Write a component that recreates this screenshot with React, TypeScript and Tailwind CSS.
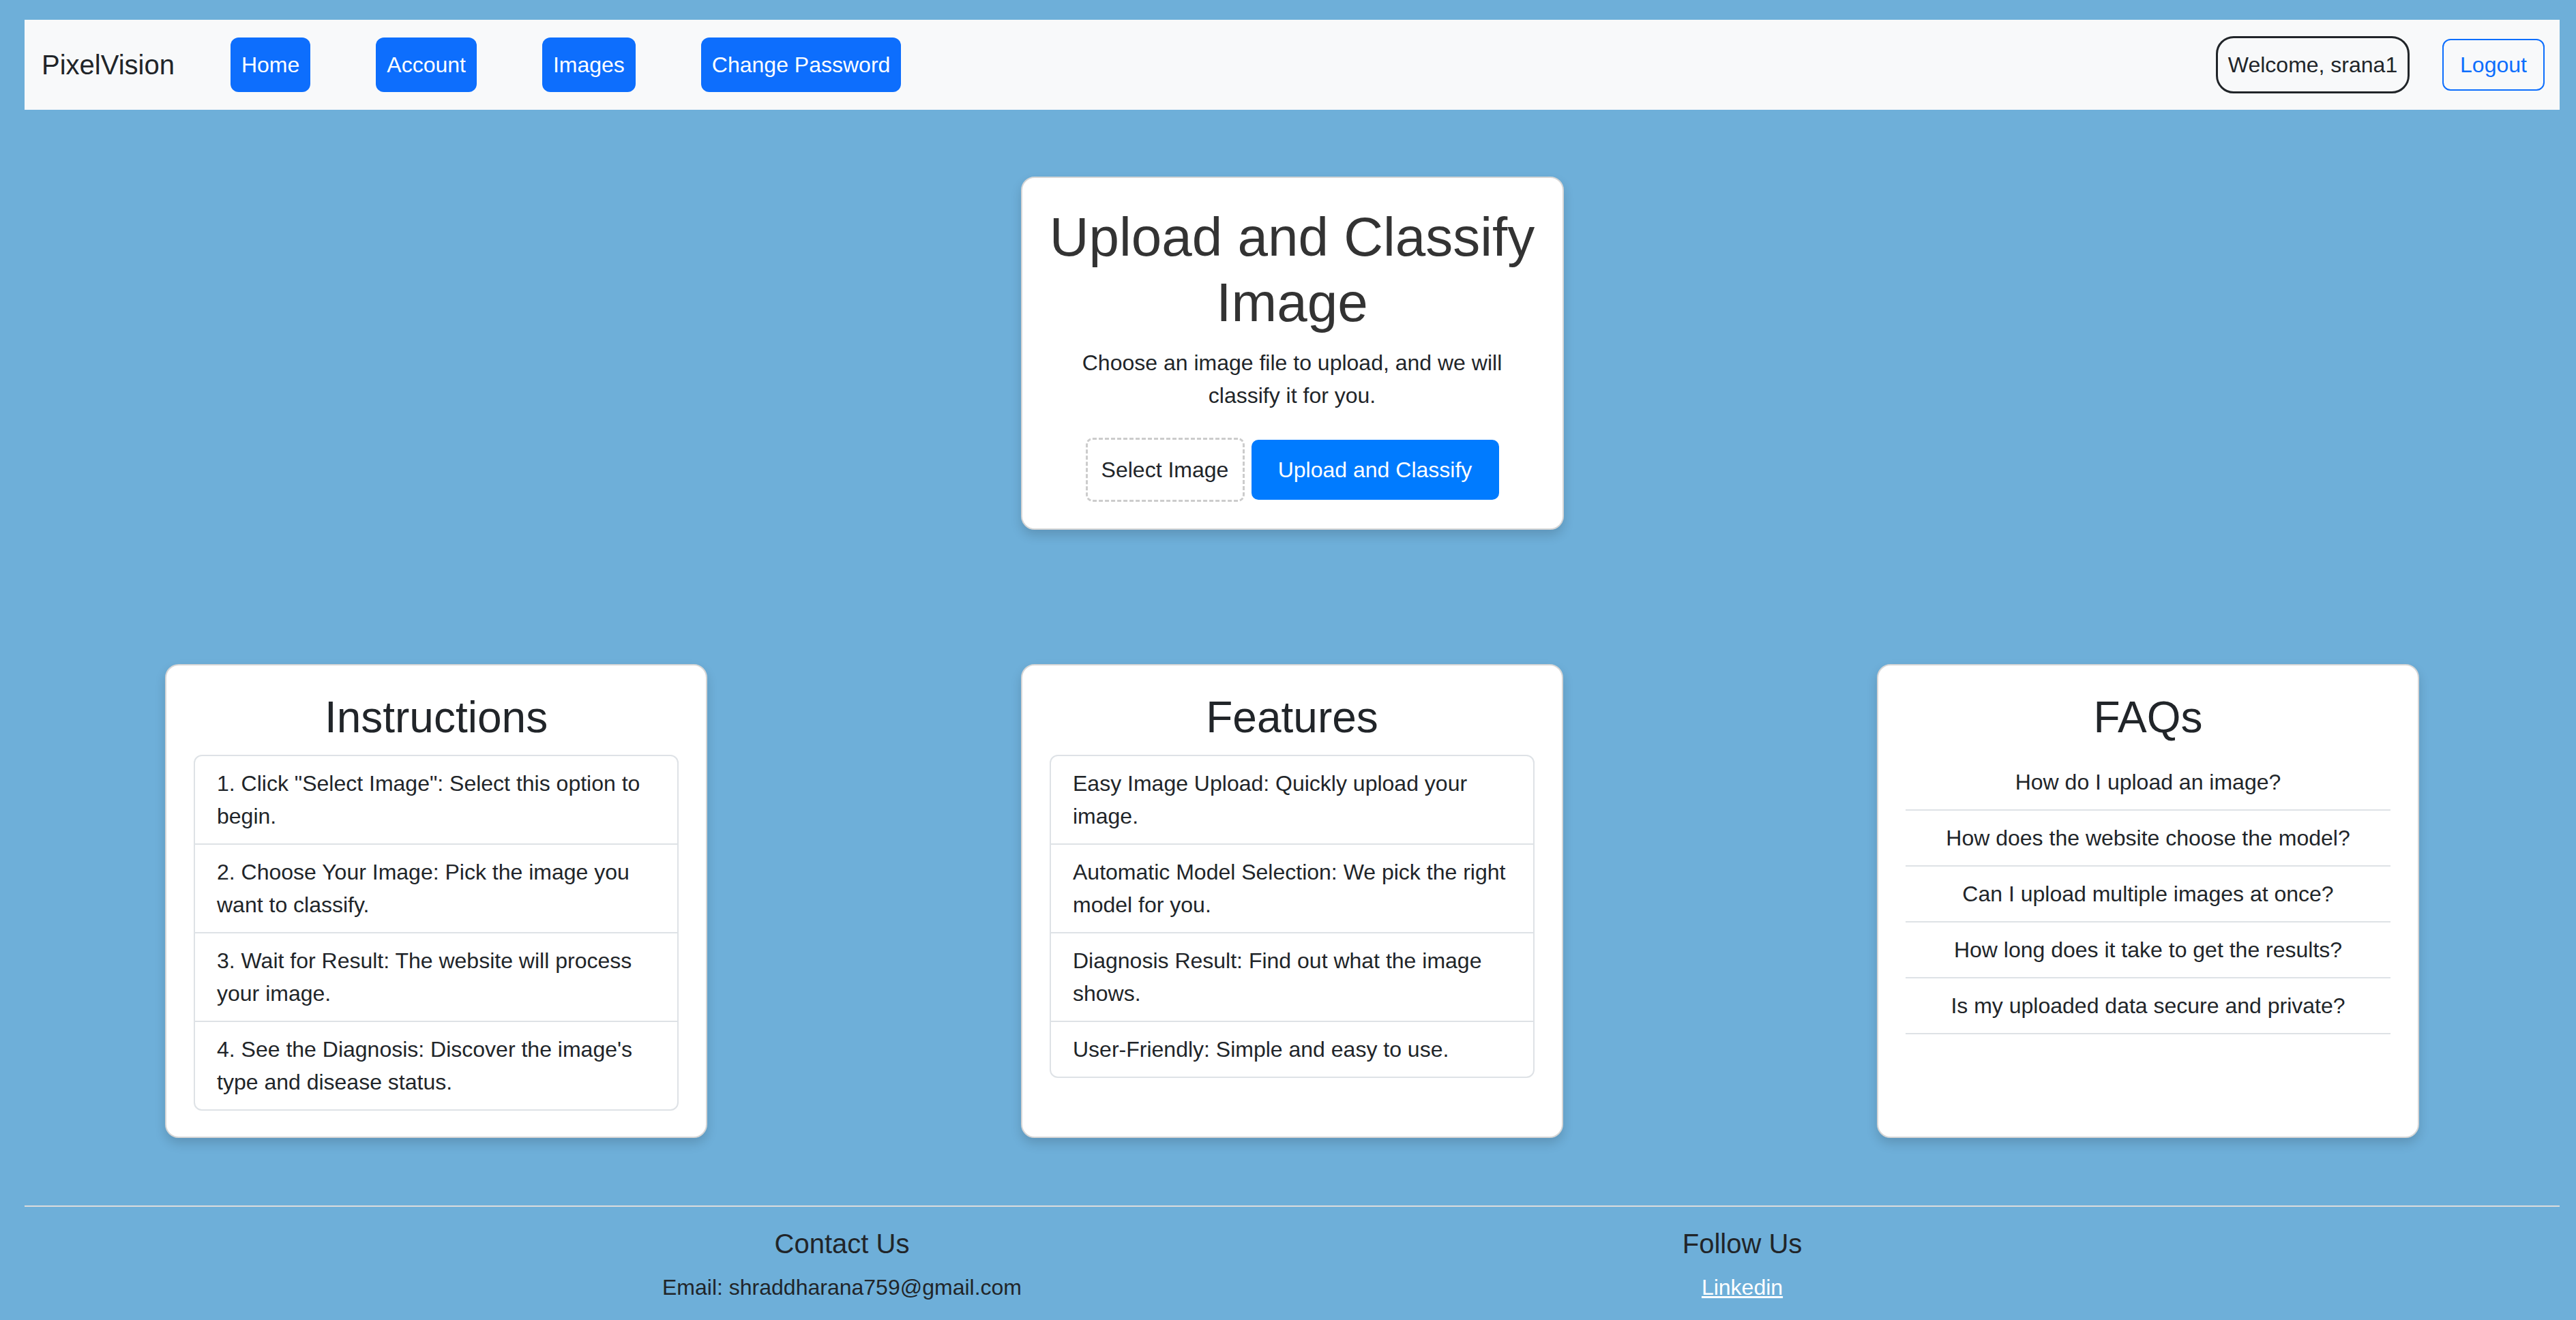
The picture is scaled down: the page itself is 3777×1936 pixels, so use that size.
const NAV_LINKS = ['Home', 'Account', 'Images', 'Change Password']

const INSTRUCTIONS = [
  '1. Click "Select Image": Select this option to begin.',
  '2. Choose Your Image: Pick the image you want to classify.',
  '3. Wait for Result: The website will process your image.',
  "4. See the Diagnosis: Discover the image's type and disease status.",
]

const FEATURES = [
  'Easy Image Upload: Quickly upload your image.',
  'Automatic Model Selection: We pick the right model for you.',
  'Diagnosis Result: Find out what the image shows.',
  'User-Friendly: Simple and easy to use.',
]

const FAQS = [
  'How do I upload an image?',
  'How does the website choose the model?',
  'Can I upload multiple images at once?',
  'How long does it take to get the results?',
  'Is my uploaded data secure and private?',
]

function InfoCard({ title, children }: { title: string; children: React.ReactNode }) {
  return (
    <div className="w-[795px] bg-white rounded-[20px] border-2 border-[#d6d6d6] shadow-[0_8px_16px_rgba(0,0,0,0.15)] px-[40px] pt-[38px] pb-[38px]">
      <h2 className="text-[64px] leading-[1.2] text-center mb-[16px] text-[#212529]">{title}</h2>
      {children}
    </div>
  )
}

function ListGroup({ items }: { items: string[] }) {
  return (
    <div className="border-2 border-[#dee2e6] rounded-[12px] divide-y-2 divide-[#dee2e6]">
      {items.map(item => (
        <div key={item} className="px-[32px] py-[16px]">{item}</div>
      ))}
    </div>
  )
}

export default function App() {
  return (
    <div className="min-h-screen bg-[#6eafd9] pt-[29px] pl-[36px] pr-[24px] font-['Liberation_Sans',Arial,sans-serif] text-[32px] leading-[1.5] text-[#212529]">
      {/* Navbar */}
      <nav className="h-[132px] bg-[#f8f9fa] flex items-center pl-[25px] pr-[22px]">
        <span className="text-[40px] leading-[1.5]">PixelVision</span>
        <div className="ml-[82px] flex gap-[96px]">
          {NAV_LINKS.map(l => (
            <button key={l} className="h-[80px] px-[16px] rounded-[12px] bg-[#0d6efd] text-white">
              {l}
            </button>
          ))}
        </div>
        <div className="ml-auto flex items-center gap-[48px]">
          <span className="h-[84px] w-[284px] flex items-center justify-center border-[3px] border-[#212529] rounded-[26px]">
            Welcome, srana1
          </span>
          <button className="h-[76px] w-[150px] border-2 border-[#0d6efd] text-[#0d6efd] rounded-[12px]">
            Logout
          </button>
        </div>
      </nav>

      {/* Upload card */}
      <div className="mt-[98px] mx-auto w-[796px] bg-white rounded-[20px] border-2 border-[#d6d6d6] shadow-[0_8px_16px_rgba(0,0,0,0.15)] px-[40px] pt-[39px] pb-[39px] text-center">
        <h1 className="text-[80px] leading-[1.2] text-[#333333] mb-[16px]">Upload and Classify Image</h1>
        <p className="mb-[38px]">Choose an image file to upload, and we will classify it for you.</p>
        <div className="flex justify-center items-center gap-[10px]">
          <div className="h-[94px] w-[233px] flex items-center justify-center border-[3px] border-dashed border-[#cccccc] rounded-[10px]">
            Select Image
          </div>
          <button className="h-[88px] w-[363px] bg-[#007bff] text-white rounded-[10px]">Upload and Classify</button>
        </div>
      </div>

      {/* Info cards */}
      <div className="-mx-[24px] mt-[197px] grid grid-cols-3 justify-items-center">
        <InfoCard title="Instructions">
          <ListGroup items={INSTRUCTIONS} />
        </InfoCard>
        <InfoCard title="Features">
          <ListGroup items={FEATURES} />
        </InfoCard>
        <InfoCard title="FAQs">
          <div>
            {FAQS.map(q => (
              <div key={q} className="px-[32px] py-[16px] border-b-2 border-[#dee2e6] text-center">{q}</div>
            ))}
          </div>
        </InfoCard>
      </div>

      {/* Footer */}
      <hr className="mt-[99px] border-0 border-t-2 border-[#dcdcdc]" />
      <footer className="max-w-[2640px] mx-auto grid grid-cols-2 text-center pt-[30px] pb-[16px]">
        <div>
          <h5 className="text-[40px] leading-[1.2] mb-[16px]">Contact Us</h5>
          <p>Email: shraddharana759@gmail.com</p>
        </div>
        <div>
          <h5 className="text-[40px] leading-[1.2] mb-[16px]">Follow Us</h5>
          <a href="#" className="text-white underline">Linkedin</a>
        </div>
      </footer>
    </div>
  )
}
